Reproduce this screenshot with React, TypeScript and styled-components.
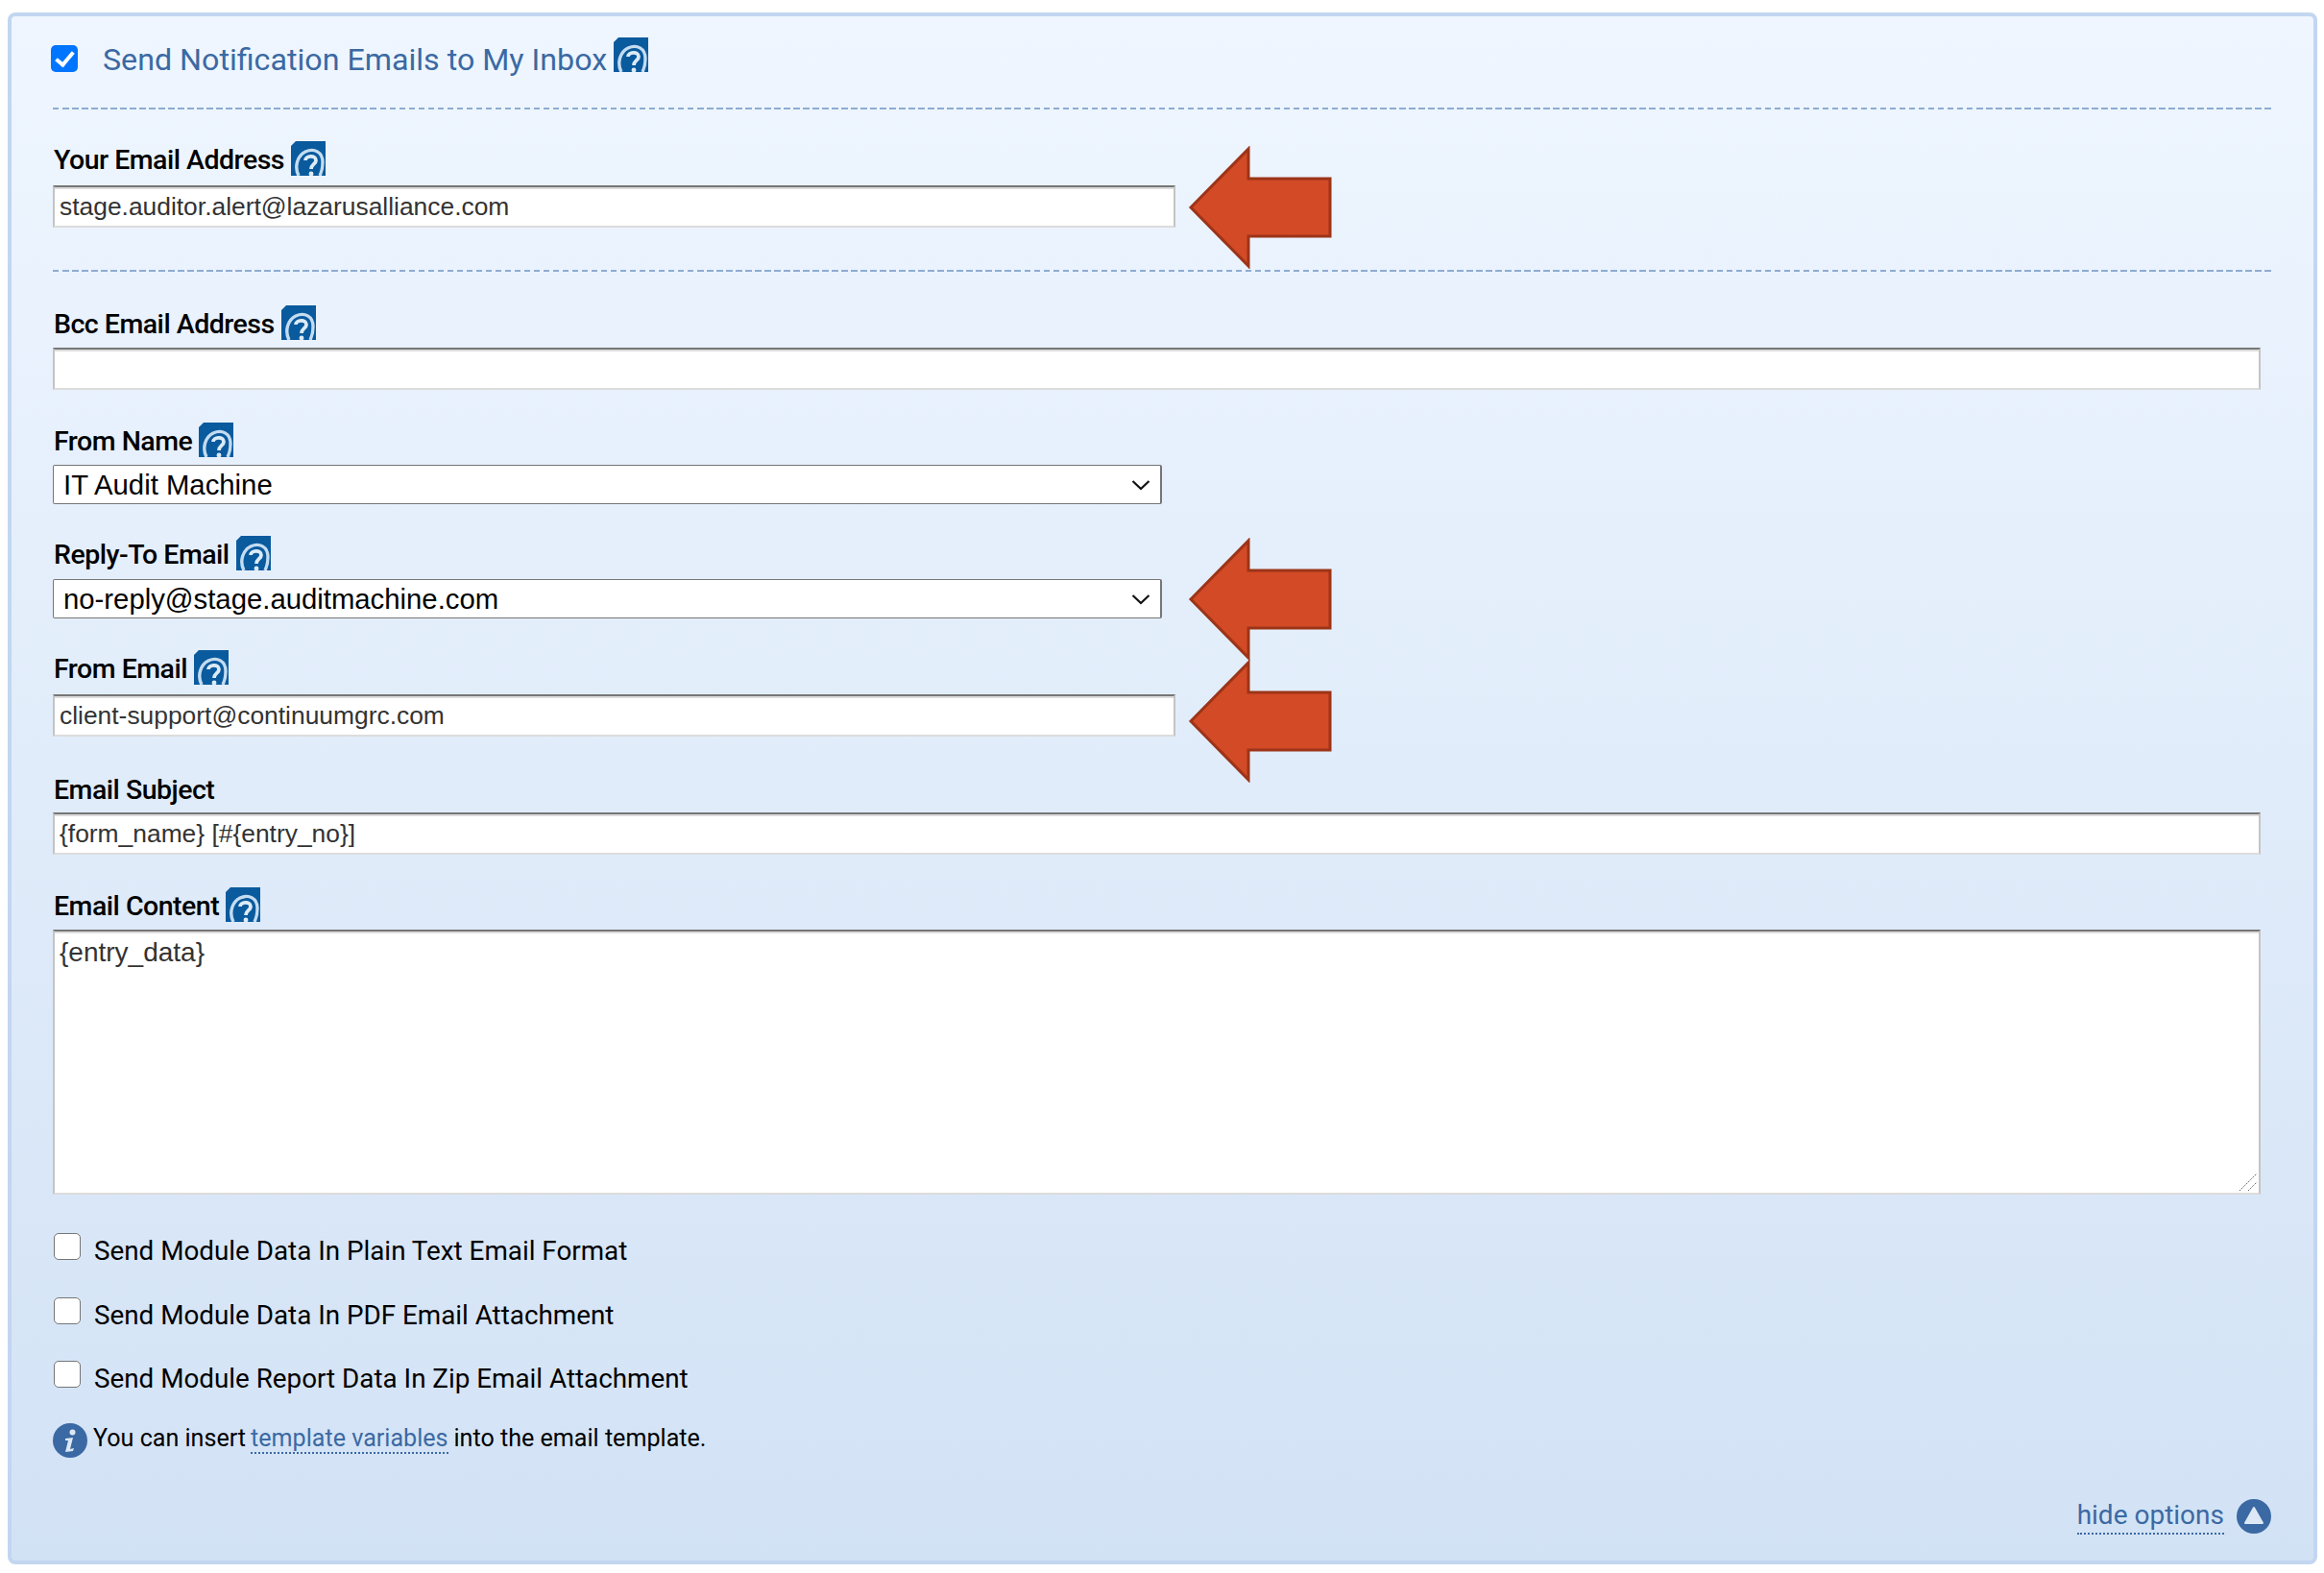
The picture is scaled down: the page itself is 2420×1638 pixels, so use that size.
import React from 'react';
import styled, { createGlobalStyle } from 'styled-components';

const GlobalStyle = createGlobalStyle`
  html, body {
    margin: 0;
    padding: 0;
    background: #fff;
  }
`;

const Panel = styled.form`
  box-sizing: border-box;
  width: 2405px;
  height: 1616px;
  margin: 13px 0 0 8px;
  padding: 22px 44px 0 43px;
  border: 4px solid #c2d6f0;
  border-radius: 8px;
  background: linear-gradient(to bottom, #eff6ff 0%, #d2e2f5 100%);
  font-family: Roboto, 'Noto Sans', sans-serif;
  color: #000;
`;

const HeadingRow = styled.div`
  display: flex;
  align-items: center;
  height: 36px;
`;

const HeadingCheck = styled.input`
  appearance: none;
  position: relative;
  flex: none;
  width: 28px;
  height: 28px;
  margin: 7px 26px 0 -2px;
  border-radius: 5px;
  background: #0075ff;

  &::after {
    content: '';
    position: absolute;
    left: 9px;
    top: 3px;
    width: 7px;
    height: 15px;
    border: solid #fff;
    border-width: 0 4px 4px 0;
    transform: rotate(40deg);
  }
`;

const HeadingText = styled.label`
  font-size: 32.2px;
  line-height: 36px;
  padding-top: 9px;
  color: #3b69a3;
  margin-right: 7px;
`;

const Rule = styled.div<{ $top: number }>`
  height: 2px;
  margin-top: ${(p) => p.$top}px;
  background: repeating-linear-gradient(to right, #8eacd2 0 6.5px, transparent 6.5px 10.015px);
`;

const Field = styled.div<{ $top: number; $gap: number }>`
  position: relative;
  display: flex;
  flex-direction: column;
  align-items: flex-start;
  gap: ${(p) => p.$gap}px;
  margin-top: ${(p) => p.$top}px;
`;

const LabelRow = styled.div`
  display: flex;
  align-items: center;
  height: 36px;
  gap: 7px;
  padding-left: 1px;
`;

const Label = styled.label`
  font-size: 28.5px;
  font-weight: 500;
  letter-spacing: -0.5px;
  line-height: 36px;
  padding-top: 3px;
  color: #000;
`;

const TextInput = styled.input<{ $wide?: boolean }>`
  box-sizing: border-box;
  width: ${(p) => (p.$wide ? '2299px' : '1169px')};
  height: 44px;
  padding: 0 5px;
  border-style: solid;
  border-width: 2px;
  border-color: #767676 #c4c4c4 #dcdcdc #c4c4c4;
  border-radius: 0;
  background: #fff;
  box-shadow: inset 0 2px 0 #dcdcdc;
  font-family: 'Liberation Sans', Arial, sans-serif;
  font-size: 26.4px;
  color: #333;
  outline: none;
`;

const SelectBox = styled.div`
  box-sizing: border-box;
  display: flex;
  align-items: center;
  justify-content: space-between;
  width: 1155px;
  height: 41px;
  padding: 0 10px 0 10px;
  border: 1px solid #767676;
  border-right-width: 2px;
  border-radius: 2px;
  background: #fff;
  font-family: 'Liberation Sans', Arial, sans-serif;
  font-size: 29.3px;
  color: #000;
`;

const TextAreaWrap = styled.div`
  position: relative;
  line-height: 0;
`;

const TextArea = styled.textarea`
  box-sizing: border-box;
  display: block;
  width: 2299px;
  height: 276px;
  padding: 6px 5px;
  border-style: solid;
  border-width: 2px;
  border-color: #767676 #c4c4c4 #dcdcdc #c4c4c4;
  box-shadow: inset 0 2px 0 #dcdcdc;
  background: #fff;
  font-family: 'Liberation Sans', Arial, sans-serif;
  font-size: 28px;
  line-height: 32px;
  color: #333;
  outline: none;
  resize: none;
`;

const ResizeGrip = styled.svg`
  position: absolute;
  right: 3px;
  bottom: 3px;
  display: block;
`;

const OptionList = styled.div`
  display: flex;
  flex-direction: column;
  gap: 38.5px;
  margin-top: 40px;
`;

const OptionRow = styled.div`
  display: flex;
  align-items: flex-start;
  height: 28px;
`;

const OptionCheck = styled.input`
  appearance: none;
  box-sizing: border-box;
  flex: none;
  width: 28px;
  height: 28px;
  margin: 0 14px 0 1px;
  border: 1.5px solid #767676;
  border-radius: 5px;
  background: #fff;
`;

const OptionText = styled.label`
  font-size: 27.8px;
  line-height: 37px;
  color: #000;
`;

const NoteRow = styled.div`
  display: flex;
  align-items: center;
  gap: 6px;
  height: 36px;
  margin-top: 37px;
  font-size: 25.1px;
  color: #000;
`;

const NoteText = styled.span`
  margin-top: -5px;
`;

const NoteLink = styled.a`
  color: #3b69a3;
  border-bottom: 2px dotted #3b69a3;
  line-height: 30px;
  margin: 0 6px 0 5px;
`;

const Toggle = styled.div`
  display: flex;
  justify-content: flex-end;
  align-items: flex-start;
  gap: 13px;
  margin-top: 43px;
`;

const ToggleLink = styled.a`
  margin-top: -1px;
  font-size: 28px;
  line-height: 36px;
  color: #3b69a3;
  border-bottom: 2px dotted #3b69a3;
`;

const ArrowMark = styled.svg`
  position: absolute;
  left: 1181px;
  display: block;
`;

const IconSvg = styled.svg`
  display: block;
  flex: none;
`;

const HelpIcon = () => (
  <IconSvg width="36" height="36" viewBox="0 0 36 36">
    <defs>
      <clipPath id="helpClip">
        <path d="M5 0H36V36H0V5Z" />
      </clipPath>
    </defs>
    <g clipPath="url(#helpClip)">
      <rect width="36" height="36" fill="#0a5a9e" />
      <path d="M8 36C3 26 7 15 15 11C24 7 33 11 33 22C33 27 32 32 30 36" fill="none" stroke="#c4dcf0" strokeWidth="3.4" />
      <path d="M15 20C15 15 26 14 26 20C26 24 21 24 21 29" fill="none" stroke="#dcebf6" strokeWidth="3.8" />
      <circle cx="21" cy="34" r="2.4" fill="#dcebf6" />
    </g>
  </IconSvg>
);

const InfoIcon = () => (
  <IconSvg width="36" height="36" viewBox="0 0 36 36">
    <circle cx="18" cy="18" r="18" fill="#3b69a3" />
    <circle cx="20.5" cy="9.5" r="3" fill="#dce8f5" />
    <path d="M13 16L21 15L18 27L22 26L21 29L13 30L16 18L13 18Z" fill="#dce8f5" />
  </IconSvg>
);

const CollapseIcon = () => (
  <IconSvg width="36" height="36" viewBox="0 0 36 36">
    <circle cx="18" cy="18" r="18" fill="#3b69a3" />
    <path d="M18 9L27 25H9Z" fill="#dce8f5" stroke="#dce8f5" strokeWidth="2" strokeLinejoin="round" />
  </IconSvg>
);

const Chevron = () => (
  <IconSvg width="20" height="12" viewBox="0 0 20 12">
    <path d="M1.5 2L10 10L18.5 2" fill="none" stroke="#111" strokeWidth="2.2" />
  </IconSvg>
);

const Arrow = ({ top }: { top: number }) => (
  <ArrowMark width="152" height="128" viewBox="0 0 152 128" style={{ top }}>
    <path
      d="M4 64L64 3V34H149V94H64V125Z"
      fill="#d34a26"
      stroke="#9c3418"
      strokeWidth="3"
    />
  </ArrowMark>
);

const options = [
  'Send Module Data In Plain Text Email Format',
  'Send Module Data In PDF Email Attachment',
  'Send Module Report Data In Zip Email Attachment',
];

const App = () => (
  <>
    <GlobalStyle />
    <Panel>
      <HeadingRow>
        <HeadingCheck type="checkbox" defaultChecked />
        <HeadingText>Send Notification Emails to My Inbox</HeadingText>
        <HelpIcon />
      </HeadingRow>
      <Rule $top={37} />

      <Field $top={33} $gap={10}>
        <LabelRow>
          <Label>Your Email Address</Label>
          <HelpIcon />
        </LabelRow>
        <TextInput defaultValue="stage.auditor.alert@lazarusalliance.com" />
        <Arrow top={5} />
      </Field>
      <Rule $top={44} />

      <Field $top={35} $gap={8}>
        <LabelRow>
          <Label>Bcc Email Address</Label>
          <HelpIcon />
        </LabelRow>
        <TextInput $wide />
      </Field>

      <Field $top={34} $gap={8}>
        <LabelRow>
          <Label>From Name</Label>
          <HelpIcon />
        </LabelRow>
        <SelectBox>
          IT Audit Machine
          <Chevron />
        </SelectBox>
      </Field>

      <Field $top={33} $gap={9}>
        <LabelRow>
          <Label>Reply-To Email</Label>
          <HelpIcon />
        </LabelRow>
        <SelectBox>
          no-reply@stage.auditmachine.com
          <Chevron />
        </SelectBox>
        <Arrow top={2} />
      </Field>

      <Field $top={33} $gap={10}>
        <LabelRow>
          <Label>From Email</Label>
          <HelpIcon />
        </LabelRow>
        <TextInput defaultValue="client-support@continuumgrc.com" />
        <Arrow top={10} />
      </Field>

      <Field $top={36} $gap={7}>
        <LabelRow>
          <Label>Email Subject</Label>
        </LabelRow>
        <TextInput $wide defaultValue="{form_name} [#{entry_no}]" />
      </Field>

      <Field $top={34} $gap={8}>
        <LabelRow>
          <Label>Email Content</Label>
          <HelpIcon />
        </LabelRow>
        <TextAreaWrap>
          <TextArea defaultValue="{entry_data}" />
          <ResizeGrip width="20" height="20" viewBox="0 0 20 20">
            <path d="M1 19L19 1M10 19L19 10" stroke="#666" strokeWidth="1" strokeDasharray="1.5 1" fill="none" />
          </ResizeGrip>
        </TextAreaWrap>
      </Field>

      <OptionList>
        {options.map((text) => (
          <OptionRow key={text}>
            <OptionCheck type="checkbox" />
            <OptionText>{text}</OptionText>
          </OptionRow>
        ))}
      </OptionList>

      <NoteRow>
        <InfoIcon />
        <NoteText>
          You can insert<NoteLink>template variables</NoteLink>into the email template.
        </NoteText>
      </NoteRow>

      <Toggle>
        <ToggleLink>hide options</ToggleLink>
        <CollapseIcon />
      </Toggle>
    </Panel>
  </>
);

export default App;
